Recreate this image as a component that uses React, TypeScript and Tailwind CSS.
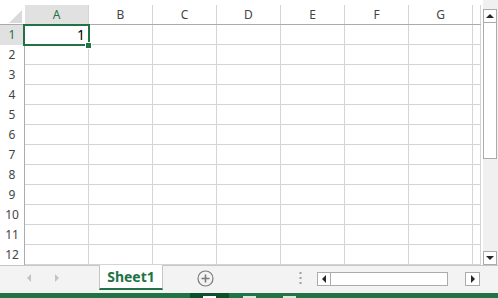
const COLS = ["A", "B", "C", "D", "E", "F", "G"];
const ROWS = Array.from({ length: 12 }, (_, i) => i + 1);

const FONT = { fontFamily: '"Noto Sans", "Open Sans", sans-serif' };

function Tri({ dir, color = "#262626" }: { dir: "up" | "down" | "left" | "right"; color?: string }) {
  const pts = {
    up: "0,5 8,5 4,1",
    down: "0,1 8,1 4,5",
    left: "5,0 5,8 1,4",
    right: "1,0 1,8 5,4",
  }[dir];
  const vert = dir === "up" || dir === "down";
  return (
    <svg width={vert ? 8 : 6} height={vert ? 6 : 8} viewBox={vert ? "0 0 8 6" : "0 0 6 8"}>
      <polygon points={pts} fill={color} />
    </svg>
  );
}

function ColumnHeaders() {
  return (
    <div className="flex h-[25px] border-b border-[#ababab]">
      <div className="relative w-[25px] shrink-0">
        <svg className="absolute left-[9px] top-[10px]" width="13" height="13" viewBox="0 0 13 13">
          <polygon points="0,13 13,13 13,0" fill="#dadada" />
        </svg>
      </div>
      {COLS.map((c) => (
        <div key={c} className="w-[64px] shrink-0 pt-[5px]">
          <div
            className={
              c === "A"
                ? "flex h-full items-center justify-center border-r border-[#d4d4d4] bg-[#e1e1e1] text-[12px] text-[#217346]"
                : "flex h-full items-center justify-center border-r border-[#d4d4d4] text-[12px] text-[#444444]"
            }
          >
            {c}
          </div>
        </div>
      ))}
      <div className="w-[8px] shrink-0 pt-[5px]">
        <div className="h-full border-r border-[#d4d4d4]" />
      </div>
    </div>
  );
}

function Row({ n }: { n: number }) {
  return (
    <div className="flex h-[20px]">
      <div
        className={
          n === 1
            ? "flex w-[25px] shrink-0 items-center justify-center border-r border-[#ababab] bg-[#e1e1e1] text-[12px] text-[#217346]"
            : "flex w-[25px] shrink-0 items-center justify-center border-r border-[#ababab] text-[12px] text-[#444444]"
        }
      >
        {n}
      </div>
      {COLS.map((c) => (
        <div
          key={c}
          className="flex w-[64px] shrink-0 items-center justify-end border-b border-r border-[#d4d4d4] pr-[3px] text-[14px] text-black"
        >
          {n === 1 && c === "A" ? "1" : ""}
        </div>
      ))}
      <div className="w-[8px] shrink-0 border-b border-r border-[#d4d4d4]" />
    </div>
  );
}

function VScroll() {
  return (
    <div className="ml-[2px] flex w-[15px] flex-col bg-[#f0f0f0] pt-[9px]">
      <div className="flex h-[14px] w-[14px] items-center justify-center border border-[#ababab] bg-white">
        <Tri dir="up" />
      </div>
      <div className="h-[136px] w-[14px] border border-t-0 border-[#ababab] bg-white" />
      <div className="flex-1" />
      <div className="flex h-[14px] w-[14px] items-center justify-center border border-[#ababab] bg-white">
        <Tri dir="down" />
      </div>
    </div>
  );
}

function SheetBar() {
  return (
    <div className="flex h-[28px] border-t border-[#c6c6c6] bg-[#f3f3f3]">
      <div className="flex w-[99px] shrink-0 items-center pb-[3px]">
        <div className="ml-[26px]">
          <Tri dir="left" color="#c3c3c3" />
        </div>
        <div className="ml-[22px]">
          <Tri dir="right" color="#c3c3c3" />
        </div>
      </div>
      <div className="mt-[-1px] flex h-[25px] w-[64px] shrink-0 items-center justify-center border-x border-b-2 border-x-[#c6c6c6] border-b-[#217346] bg-white text-[14px] font-bold text-[#217346]">
        Sheet1
      </div>
      <div className="flex w-[84px] shrink-0 items-center justify-center pb-[3px]">
        <svg width="17" height="17" viewBox="0 0 17 17">
          <circle cx="8.5" cy="8.5" r="7.5" fill="none" stroke="#7a7a7a" strokeWidth="1.2" />
          <path d="M8.5 4.5v8M4.5 8.5h8" stroke="#7a7a7a" strokeWidth="1.6" />
        </svg>
      </div>
      <div className="flex w-[70px] shrink-0 items-center justify-end pb-[3px] pr-[15px]">
        <svg width="3" height="12" viewBox="0 0 3 12">
          <rect x="0.5" y="0" width="2" height="2" fill="#a0a0a0" />
          <rect x="0.5" y="5" width="2" height="2" fill="#a0a0a0" />
          <rect x="0.5" y="10" width="2" height="2" fill="#a0a0a0" />
        </svg>
      </div>
      <div className="flex w-[163px] shrink-0 items-start pt-[6px]">
        <div className="flex h-[14px] w-[14px] items-center justify-center border border-[#ababab] bg-white">
          <Tri dir="left" />
        </div>
        <div className="h-[14px] w-[117px] border border-l-0 border-[#ababab] bg-white" />
        <div className="flex-1" />
        <div className="flex h-[14px] w-[15px] items-center justify-center border border-[#ababab] bg-white">
          <Tri dir="right" />
        </div>
      </div>
    </div>
  );
}

function StatusBar() {
  return (
    <div className="relative h-[5px] bg-[#217346]">
      <div className="absolute left-[190px] top-0 h-full w-[39px] bg-[#0a5129]" />
      <div className="absolute left-[203px] top-[3px] h-[2px] w-[13px] bg-white" />
      <div className="absolute left-[243px] top-[3px] h-[2px] w-[13px] bg-[#d8e8de]" />
      <div className="absolute left-[283px] top-[3px] h-[2px] w-[13px] bg-[#d8e8de]" />
    </div>
  );
}

export default function App() {
  return (
    <div className="flex h-[298px] w-[498px] flex-col overflow-hidden bg-white" style={FONT}>
      <div className="flex h-[265px] shrink-0">
        <div className="relative w-[481px] shrink-0">
          <ColumnHeaders />
          {ROWS.map((n) => (
            <Row key={n} n={n} />
          ))}
          {/* active cell A1 */}
          <div className="absolute left-[23px] top-[24px] h-[22px] w-[67px] border-2 border-[#217346]" />
          <div className="absolute left-[85px] top-[42px] h-[7px] w-[7px] border border-white bg-[#217346]" />
        </div>
        <VScroll />
      </div>
      <SheetBar />
      <StatusBar />
    </div>
  );
}
